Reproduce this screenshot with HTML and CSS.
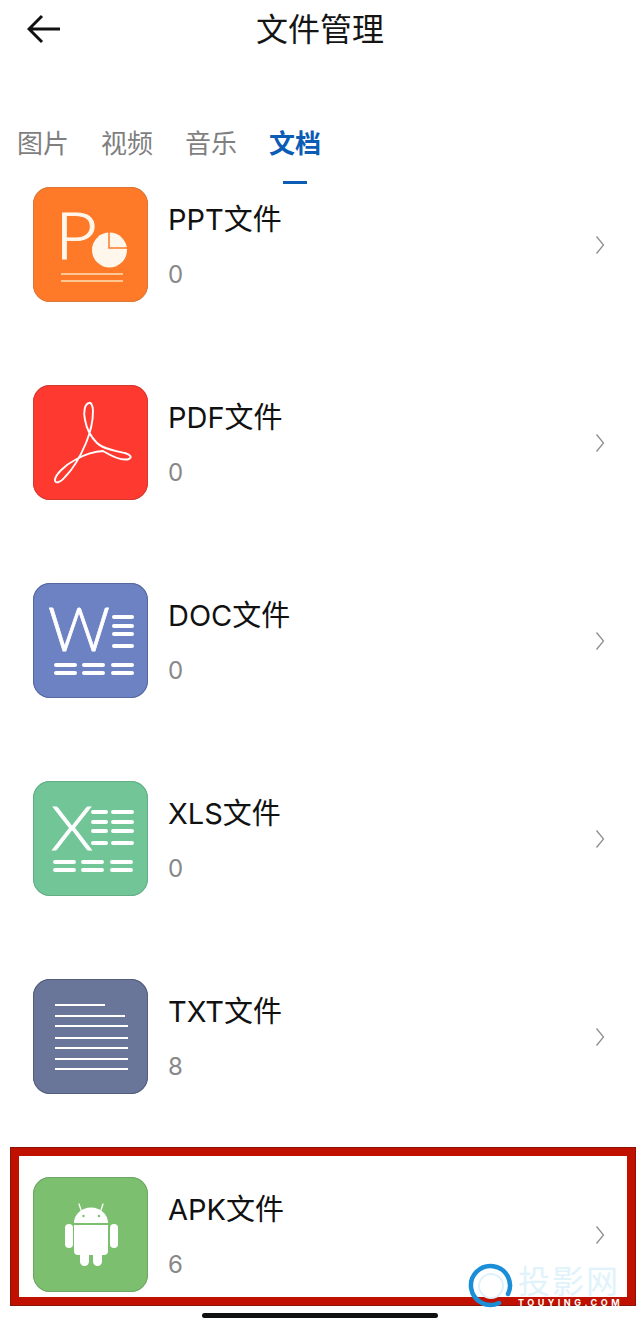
FILE: index.html
```html
<!DOCTYPE html>
<html lang="zh-CN">
<head>
<meta charset="utf-8">
<title>文件管理</title>
<link rel="stylesheet" href="styles.css">
</head>
<body>
<div class="page">
  <header class="topbar">
    <svg class="back" viewBox="0 0 34 30" width="34" height="30"><path d="M33 15H3M15 2L2 15l13 13" fill="none" stroke="#111" stroke-width="3"/></svg>
    <h1 class="title">文件管理</h1>
  </header>
  <nav class="tabs">
    <span class="tab">图片</span>
    <span class="tab">视频</span>
    <span class="tab">音乐</span>
    <span class="tab active">文档</span>
  </nav>
  <main class="list">
    <section class="row">
      <svg class="icon ppt" viewBox="0 0 115 115" width="115" height="115">
        <text class="glyph" x="22" y="72" font-size="66" textLength="42" lengthAdjust="spacingAndGlyphs">P</text>
        <circle cx="76.500" cy="63" r="17.500" fill="#fff7ec"/>
        <path d="M76 44v17h20" fill="none" stroke="#fe7a29" stroke-width="1.500"/>
        <path d="M28 87h62M28 94h62" stroke="#fdc692" stroke-width="1.800"/>
      </svg>
      <div class="info"><div class="name">PPT文件</div><div class="count">0</div></div>
      <svg class="chev" viewBox="0 0 10 20" width="10" height="20"><path d="M1.500 1.500l7 8.500-7 8.500" fill="none" stroke="#8f8f8f" stroke-width="1.300"/></svg>
    </section>
    <section class="row">
      <svg class="icon pdf" viewBox="0 0 115 115" width="115" height="115">
        <path d="M56 18C52 19 50 26 52 35C54 46 58 52 64 58C70 64 82 66 92 68C98 70 99 72 96 74C90 76 80 72 70 66C62 66 50 70 42 75C32 80 22 90 22 95C22 99 27 98 32 92C40 84 48 70 53 58C58 46 60 34 60 26C60 21 58 17 56 18Z" fill="none" stroke="#fff" stroke-width="1.900" stroke-linejoin="round"/>
      </svg>
      <div class="info"><div class="name">PDF文件</div><div class="count">0</div></div>
      <svg class="chev" viewBox="0 0 10 20" width="10" height="20"><path d="M1.500 1.500l7 8.500-7 8.500" fill="none" stroke="#8f8f8f" stroke-width="1.300"/></svg>
    </section>
    <section class="row">
      <svg class="icon doc" viewBox="0 0 115 115" width="115" height="115">
        <text class="glyph" x="15" y="68" font-size="62" textLength="62" lengthAdjust="spacingAndGlyphs">W</text>
        <path d="M81 34h18M81 43h18M81 51h18M81 63h18M23 82h19M23 90h19M51 82h19M51 90h19M80 82h19M80 90h19" stroke="#fff" stroke-width="4" stroke-linecap="round"/>
      </svg>
      <div class="info"><div class="name">DOC文件</div><div class="count">0</div></div>
      <svg class="chev" viewBox="0 0 10 20" width="10" height="20"><path d="M1.500 1.500l7 8.500-7 8.500" fill="none" stroke="#8f8f8f" stroke-width="1.300"/></svg>
    </section>
    <section class="row">
      <svg class="icon xls" viewBox="0 0 115 115" width="115" height="115">
        <text class="glyph" x="18" y="69" font-size="62" textLength="42" lengthAdjust="spacingAndGlyphs">X</text>
        <path d="M60 31h13M60 41h13M60 50h13M60 62h13M80 31h19M80 41h19M80 50h19M80 62h19M22 81h19M22 89h19M50 81h19M50 89h19M79 81h19M79 89h19" stroke="#fff" stroke-width="4" stroke-linecap="round"/>
      </svg>
      <div class="info"><div class="name">XLS文件</div><div class="count">0</div></div>
      <svg class="chev" viewBox="0 0 10 20" width="10" height="20"><path d="M1.500 1.500l7 8.500-7 8.500" fill="none" stroke="#8f8f8f" stroke-width="1.300"/></svg>
    </section>
    <section class="row">
      <svg class="icon txt" viewBox="0 0 115 115" width="115" height="115">
        <path d="M22 26h50M22 37h70M22 47h73M22 59h73M22 69h73M22 80h73M22 90h73" stroke="#fff" stroke-width="2.200"/>
      </svg>
      <div class="info"><div class="name">TXT文件</div><div class="count">8</div></div>
      <svg class="chev" viewBox="0 0 10 20" width="10" height="20"><path d="M1.500 1.500l7 8.500-7 8.500" fill="none" stroke="#8f8f8f" stroke-width="1.300"/></svg>
    </section>
    <section class="row">
      <svg class="icon apk" viewBox="0 0 115 115" width="115" height="115">
        <path d="M41 46a17 15.500 0 0 1 34 0z" fill="#fff"/>
        <path d="M48 33l-2-6M68 33l2-6" stroke="#fff" stroke-width="1.300" stroke-linecap="round"/>
        <circle cx="50.500" cy="39" r="1.200" fill="#7bbf6f"/><circle cx="66" cy="39" r="1.200" fill="#7bbf6f"/>
        <path d="M41 48h34v26a4 4 0 0 1-4 4H45a4 4 0 0 1-4-4z" fill="#fff"/>
        <rect x="32" y="47" width="8" height="24" rx="4" fill="#fff"/>
        <rect x="77" y="47" width="8" height="24" rx="4" fill="#fff"/>
        <rect x="47" y="72" width="9" height="17" rx="4.500" fill="#fff"/>
        <rect x="60" y="72" width="9" height="17" rx="4.500" fill="#fff"/>
      </svg>
      <div class="info"><div class="name">APK文件</div><div class="count">6</div></div>
      <svg class="chev" viewBox="0 0 10 20" width="10" height="20"><path d="M1.500 1.500l7 8.500-7 8.500" fill="none" stroke="#8f8f8f" stroke-width="1.300"/></svg>
    </section>
  </main>
  <div class="frame"></div>
  <div class="watermark">
    <svg class="wm-ring" viewBox="0 0 46 46" width="46" height="46">
      <circle cx="23" cy="23" r="12" fill="none" stroke="#dff2fb" stroke-width="2"/>
      <path d="M31 40A19.500 19.500 0 1 1 40 31" fill="none" stroke="#1a8fd8" stroke-width="4.500" stroke-linecap="round"/>
    </svg>
    <div class="wm-text">
      <div class="wm-cn">投影网</div>
      <div class="wm-en">TOUYING.COM</div>
    </div>
  </div>
  <div class="home"></div>
</div>
</body>
</html>
```
FILE: styles.css
```css
* { box-sizing: border-box; margin: 0; padding: 0; }
html, body { background: #fff; }
body { width: 640px; height: 1330px; overflow: hidden; font-family: "Inter", "Noto Sans CJK SC", sans-serif; }
.page { position: relative; width: 640px; height: 1330px; overflow: hidden; }
.topbar { position: relative; height: 60px; display: flex; align-items: center; justify-content: center; }
.back { position: absolute; left: 27px; top: 14px; }
.title { font-size: 32px; font-weight: 400; color: #151515; line-height: 60px; }
.tabs { height: 101px; padding: 0 0 0 17px; display: flex; gap: 32px; align-items: flex-end; }
.tab { position: relative; font-size: 26px; line-height: 34px; color: #7f7f7f; }
.tab.active { color: #0b5cb5; font-weight: 700; }
.tab.active::after { content: ""; position: absolute; left: 14px; top: 54px; width: 24px; height: 3px; background: #0b5cb5; }
.list { padding-top: 26px; display: flex; flex-direction: column; gap: 83px; }
.row { display: flex; align-items: center; padding: 0 35px 0 33px; height: 115px; }
.icon { flex: none; border-radius: 17px; }
.ppt { background: #fe7a29; box-shadow: inset 0 0 0 1px #d9783a; }
.pdf { background: #fe3a30; box-shadow: inset 0 0 0 1px #d23a30; }
.doc { background: #6c82c2; box-shadow: inset 0 0 0 1px #56689f; }
.xls { background: #71c597; box-shadow: inset 0 0 0 1px #62ad86; }
.txt { background: #69769a; box-shadow: inset 0 0 0 1px #535e7c; }
.apk { background: #7bbf6f; box-shadow: inset 0 0 0 1px #6ea765; }
.glyph { font-family: "Lato", sans-serif; font-weight: 300; fill: #fff7ec; stroke: #fff7ec; stroke-width: 0.8px; }
.doc .glyph, .xls .glyph { fill: #fff; stroke: #fff; }
.info { flex: 1; margin-left: 20px; align-self: flex-start; }
.name { font-size: 29px; line-height: 36px; margin-top: 15px; color: #111; }
.count { font-size: 24px; line-height: 30px; margin-top: 22px; color: #888; }
.chev { flex: none; }
.frame { position: absolute; left: 10px; top: 1147px; width: 626px; height: 159px; border: 9px solid #c01100; outline: 1px solid #8a1408; outline-offset: -1px; }
.watermark { position: absolute; left: 468px; top: 1263px; display: flex; gap: 4px; }
.wm-text { display: flex; flex-direction: column; }
.wm-cn { font-size: 32px; line-height: 32px; margin-top: 3px; width: 104px; color: #e0f3fb; letter-spacing: 2px; }
.wm-en { font-size: 9px; line-height: 9px; font-weight: 700; color: #fff; letter-spacing: 3.500px; white-space: nowrap; }
.home { position: absolute; left: 202px; top: 1313px; width: 236px; height: 5px; border-radius: 3px; background: #111; }
```
